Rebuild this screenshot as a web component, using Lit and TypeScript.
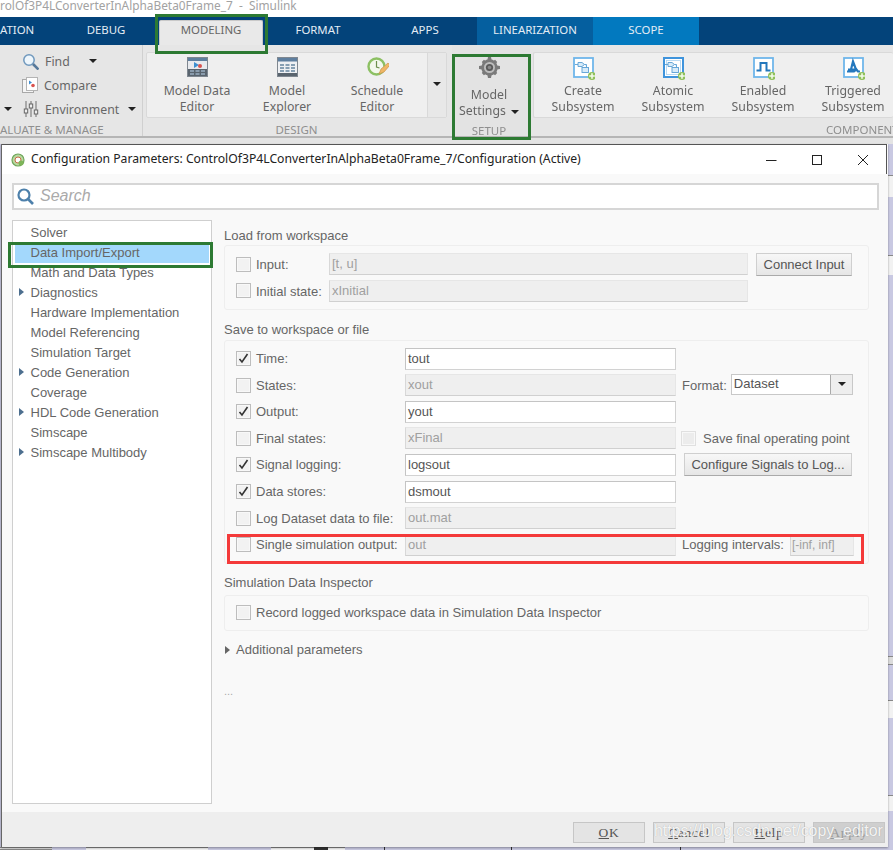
import { LitElement, html, css, svg } from "lit";
import { customElement } from "lit/decorators.js";

const plus = svg`<circle cx="19" cy="19" r="4" fill="#8fc05a"/><path d="M19 16.2v5.6M16.2 19h5.6" stroke="#f2fae8" stroke-width="1.6"/>`;
const frame = (s: number) => svg`<rect x="1" y="1" width="19" height="19" fill="#fff" stroke="#6fb6ea" stroke-width="${s}"/>`;
const subBlocks = svg`<path d="M5 5.5h4l2.5 2-2.5 2H5zM2 7.5h3M11.5 7.5h2v3" fill="#d7ebf9" stroke="#5a9fd4" stroke-width=".9"/><rect x="9" y="10.5" width="6.5" height="5" fill="#d7ebf9" stroke="#5a9fd4" stroke-width=".9"/>`;

const icons: Record<string, unknown> = {
  data: svg`<rect x=".5" y=".5" width="20" height="19" fill="#e8eaee" stroke="#7f8790"/><rect x="1" y="1" width="19" height="3" fill="#5f7f9f"/><path d="M7 5l5 3-5 3z" fill="#3d8fd0"/><circle cx="13" cy="9" r="2" fill="#d9534f"/><rect x="1" y="12" width="19" height="7" fill="#59646e"/><path d="M3 14h4M8.5 14h4M14 14h4M3 17h4M8.5 17h4M14 17h4" stroke="#b9d2ea" stroke-width="1.2"/>`,
  explorer: svg`<rect x=".5" y=".5" width="20" height="19" fill="#eef0f3" stroke="#7f8790"/><rect x="1" y="1" width="19" height="3.5" fill="#5f7f9f"/><path d="M3 8h4M8.5 8h4M14 8h4M3 11h4M8.5 11h4M14 11h4M3 14h4M8.5 14h4M14 14h4" stroke="#66849f" stroke-width="1.4"/><rect x="1" y="16" width="19" height="3" fill="#59646e"/>`,
  schedule: svg`<circle cx="9.5" cy="9.5" r="8" fill="#f3f8ec" stroke="#8cc063" stroke-width="2.4"/><path d="M9.5 4v6l3 1" fill="none" stroke="#6d8f4d" stroke-width="1.2"/><path d="M12 17l2-5 7-6 2 2-6 7z" fill="#efb765" stroke="#c9944d" stroke-width=".7"/>`,
  gear: svg`<g fill="#7a7a7a"><circle cx="10.5" cy="10.5" r="8.2"/><path d="M9 0h3l.6 3H8.400zM9 21h3l.6-3H8.400zM0 9v3l3 .6V8.400zM21 9v3l-3 .6V8.400zM2.800 4.900l2.100-2.100 2.500 1.700-2.900 2.900zM18.200 16.100l-2.100 2.100-2.500-1.700 2.900-2.900zM4.900 18.200l-2.100-2.100 1.700-2.500 2.900 2.900zM16.100 2.800l2.100 2.100-1.700 2.500-2.900-2.900z"/></g><circle cx="10.500" cy="10.500" r="5.500" fill="#bdbdbd"/><circle cx="10.500" cy="10.500" r="3.600" fill="#5a5a5a"/><circle cx="10.500" cy="10.500" r="1.800" fill="#8a8a8a"/>`,
  create: svg`${frame(1.8)}${subBlocks}${plus}`,
  atomic: svg`<rect x="1" y="1" width="19" height="19" fill="#fff" stroke="#3f94dc" stroke-width="2"/><rect x="3.500" y="3.500" width="14" height="14" fill="none" stroke="#a9d2f0" stroke-width=".8"/>${subBlocks}${plus}`,
  enabled: svg`${frame(1.8)}<path d="M3.500 13.500h4V6h6v7.500h4" fill="none" stroke="#2478bd" stroke-width="2"/>${plus}`,
  triggered: svg`${frame(1.8)}<path d="M4 14.500h3.500L10 4.500l3 8H5M8 14.500h3l2.500-2 1.500 2h2" fill="none" stroke="#2478bd" stroke-width="2.200"/>${plus}`,
  find: svg`<circle cx="7" cy="7" r="5.200" fill="#eef6fc" stroke="#6f98bd" stroke-width="1.500"/><path d="M11 11l5.500 5.500" stroke="#56789a" stroke-width="2.600"/>`,
  compare: svg`<rect x=".5" y="2.500" width="11" height="13" fill="#f5f5f5" stroke="#a8a8a8"/><rect x="4.500" y=".5" width="11" height="13" fill="#fff" stroke="#b4b4b4"/><path d="M7 3.500l3 2-3 2z" fill="#3f8ccf"/><circle cx="11" cy="8.500" r="1.800" fill="#d9534f"/>`,
  env: svg`<path d="M3 1v16M8 1v16M13 1v16" stroke="#777" stroke-width="1.100"/><rect x="1.300" y="9" width="3.400" height="4" fill="#eee" stroke="#666"/><rect x="6.300" y="4" width="3.400" height="4" fill="#eee" stroke="#666"/><rect x="11.300" y="10" width="3.400" height="4" fill="#eee" stroke="#666"/>`,
};

const tabs = [
  { t: "ATION", w: 53, c: "clip" },
  { t: "DEBUG", w: 106, c: "" },
  { t: "MODELING", w: 104, c: "active" },
  { t: "FORMAT", w: 110, c: "" },
  { t: "APPS", w: 104, c: "" },
  { t: "LINEARIZATION", w: 116, c: "lin" },
  { t: "SCOPE", w: 106, c: "scope" },
];

const tree = [
  ["Solver", 0], ["Data Import/Export", 0, 1], ["Math and Data Types", 0], ["Diagnostics", 1],
  ["Hardware Implementation", 0], ["Model Referencing", 0], ["Simulation Target", 0],
  ["Code Generation", 1], ["Coverage", 0], ["HDL Code Generation", 1], ["Simscape", 0], ["Simscape Multibody", 1],
] as [string, number, number?][];

const marks = [
  { c: "green", x: 155, y: 14, w: 113, h: 40 },
  { c: "green", x: 452, y: 54, w: 79, h: 86 },
  { c: "green", x: 8, y: 242, w: 205, h: 26 },
  { c: "red", x: 227, y: 534, w: 637, h: 30 },
];

const scraps = [
  { c: "w", x: 887, y: 175, w: 6, h: 22 }, { c: "w", x: 887, y: 255, w: 6, h: 20 },
  { c: "g", x: 887, y: 656, w: 6, h: 9 }, { c: "w", x: 887, y: 700, w: 6, h: 18 },
  { c: "w", x: 887, y: 795, w: 6, h: 16 },
  { c: "g", x: 0, y: 847, w: 52, h: 3 }, { c: "w", x: 86, y: 847, w: 122, h: 3 },
  { c: "w", x: 271, y: 847, w: 74, h: 3 }, { c: "k", x: 314, y: 847, w: 14, h: 3 },
  { c: "k", x: 384, y: 847, w: 1, h: 3 }, { c: "k", x: 511, y: 847, w: 1, h: 3 }, { c: "k", x: 680, y: 847, w: 1, h: 3 },
];

@customElement("app-root")
export class AppRoot extends LitElement {
  static styles = css`
    :host { display: block; width: 893px; height: 850px; overflow: hidden; background: #fff; }
    .page { position: relative; width: 893px; height: 850px; display: flex; flex-direction: column; overflow: hidden; filter: blur(0.35px);
      font-family: "Noto Sans", "Open Sans", sans-serif; color: #666; }
    .title { height: 17px; flex: none; font-size: 11.85px; line-height: 11px; color: #a2a2a2; white-space: pre; background: #fff; overflow: hidden; }
    .tabs { height: 28px; flex: none; background: #03437a; display: flex; }
    .tab { display: flex; align-items: center; justify-content: center; color: #e4edf5; font-size: 11.4px; padding-bottom: 3px; box-sizing: border-box; }
    .tab.clip { justify-content: flex-start; }
    .tab.active { background: #e9e9e9; color: #666; margin-top: 3px; padding-bottom: 8px; border: 1px solid #c9c9c9; border-bottom: 0; border-radius: 2px 2px 0 0; }
    .tab.lin { background: #055f9f; }
    .tab.scope { background: #0279bf; }
    .ribbon { height: 93px; flex: none; background: #e6e6e6; border-bottom: 2px solid #b5b5b5; box-sizing: border-box; display: flex; }
    .sec { display: flex; flex-direction: column; flex: none; box-sizing: border-box; }
    .sec-left { width: 143px; border-right: 1px solid #d0d0d0; }
    .sec-design { width: 301px; margin-left: 3px; padding-top: 7px; }
    .sec-setup { width: 78px; margin-left: 5px; background: #e3e3e3; padding-right: 4px; }
    .sec-comp { flex: 1; margin-left: 3px; padding-top: 7px; overflow: hidden; }
    .panel { height: 66px; flex: none; display: flex; background: #efefef; border: 1px solid #d9d9d9; border-radius: 2px; box-sizing: border-box; }
    .sec-comp .panel { border-right: 0; padding-left: 4px; }
    .sec-design .panel { padding-left: 5px; }
    .item { width: 90px; flex: none; display: flex; flex-direction: column; align-items: center; font-size: 12.3px; line-height: 16px; color: #666; text-align: center; white-space: nowrap; }
    .item svg { margin-top: 4px; margin-bottom: 3px; }
    .more { margin-left: auto; width: 19px; border-left: 1px solid #d9d9d9; background: #e8e8e8; display: flex; align-items: flex-start; justify-content: center; padding-top: 29px; box-sizing: border-box; }
    .caret { width: 0; height: 0; border-left: 4px solid transparent; border-right: 4px solid transparent; border-top: 4px solid #222; display: inline-block; flex: none; }
    .seclabel { font-size: 11.5px; color: #8f8f8f; text-align: center; white-space: nowrap; margin-top: 4px; line-height: 16px; }
    .sec-left .seclabel { text-align: left; margin-top: 1px; }
    .sec-comp .seclabel { text-align: left; margin-left: 293px; }
    .mini { height: 24px; display: flex; align-items: center; font-size: 12.3px; color: #666; position: relative; }
    .minis { height: 76px; padding-top: 4px; box-sizing: border-box; display: flex; flex-direction: column; }
    .mini svg { flex: none; margin-right: 6px; }
    .setup { display: flex; flex-direction: column; align-items: center; height: 76px; font-size: 12.3px; line-height: 16px; padding-top: 12px; box-sizing: border-box; }
    .setup svg { margin-bottom: 9px; }
    .setup .caret { margin-left: 5px; vertical-align: middle; }
    .work { flex: 1; background: #c9c9e2; position: relative; }
    .strip { height: 6px; background: #e4e4e4; }
    .scrap { position: absolute; }
    .scrap.w { background: #f2f2f2; border-top: 1px solid #888; box-sizing: border-box; }
    .scrap.g { background: #dcdcdc; border-top: 1px solid #888; border-bottom: 1px solid #888; box-sizing: border-box; }
    .scrap.k { background: #333; }
    .dialog { position: absolute; left: 1px; top: 144px; width: 887px; height: 703px; display: flex; flex-direction: column; background: #f9f9f9; border-left: 1px solid #666; box-sizing: border-box; box-shadow: 0 1px 2px rgba(0,0,0,.35); }
    .dtitle { height: 30px; flex: none; background: #fff; border-top: 1px solid #555; border-right: 1px solid #555; margin-right: 1px; box-sizing: border-box; display: flex; align-items: center; padding-left: 9px; font-size: 12.2px; color: #222; }
    .dtitle .t { margin-left: 6px; white-space: nowrap; padding-bottom: 2px; }
    .winbtns { margin-left: auto; display: flex; }
    .winbtns svg { display: block; width: 46px; height: 14px; }
    .body { flex: 1; min-height: 0; padding: 9px 9px 8px 10px; display: flex; flex-direction: column; font-family: "Liberation Sans", Arial, sans-serif; font-size: 13px; color: #666; }
    .search { height: 27px; flex: none; background: #fff; border: 2px solid #d6d6d6; box-sizing: border-box; display: flex; align-items: center; padding-left: 3px; font-size: 16px; font-style: italic; color: #aaa; }
    .search svg { margin-right: 6px; }
    .search span { padding-bottom: 2px; }
    .cols { flex: 1; min-height: 0; margin-top: 10px; display: flex; }
    .tree { width: 200px; flex: none; background: #fff; border: 1px solid #cfcfcf; box-sizing: border-box; padding: 1px 2px; }
    .node { height: 20px; display: flex; align-items: center; padding-left: 15.5px; position: relative; white-space: nowrap; box-sizing: border-box; }
    .node.sel { background: #a3d8fc; margin-top: 1px; margin-bottom: -1px; padding-bottom: 2px; }
    .node.kids::before, .more-row::before { content: ""; border-left: 5px solid #4d6f8f; border-top: 4px solid transparent; border-bottom: 4px solid transparent; position: absolute; left: 4px; top: 6px; }
    .main { flex: 1; margin-left: 12px; margin-right: 10px; min-width: 0; display: flex; flex-direction: column; }
    .gtitle { height: 25px; line-height: 31px; color: #666; flex: none; box-sizing: border-box; }
    .group { border: 1px solid #eeeeee; border-radius: 3px; box-sizing: border-box; padding: 7px 15px 7px 11px; display: flex; flex-direction: column; gap: 4.6px; flex: none; }
    .row { height: 22px; display: flex; align-items: center; flex: none; }
    .cb { width: 15px; height: 15px; flex: none; box-sizing: border-box; border: 1px solid #bdbdbd; background: #f2f2f2; margin-right: 5px; display: flex; align-items: center; justify-content: center; box-shadow: inset 0 0 0 1px #f8f8f8; }
    .cb.dim { border-color: #e0e0e0; background: #ececec; }
    .lab { flex: none; white-space: nowrap; }
    .l72 { width: 73px; padding-top: 1px; }
    .l148 { width: 149px; }
    .f { height: 22px; box-sizing: border-box; border: 1px solid #d2d2d2; border-left-color: #c4c4c4; border-top-color: #c4c4c4; background: #fff; color: #555; padding-left: 2px; line-height: 20px; flex: none; white-space: nowrap; overflow: hidden; }
    .f.off { background: #efefef; color: #a0a0a0; border-color: #e6e6e6 #e6e6e6 #d0d0d0 #d8d8d8; }
    .w419 { width: 419px; }
    .w271 { width: 271px; }
    .w64 { width: 64px; font-size: 12px; padding-left: 1px; }
    .btn { height: 23px; box-sizing: border-box; border: 1px solid #cfcfcf; border-bottom-color: #aaa; background: linear-gradient(#f7f7f7, #e6e6e6); color: #555; display: flex; align-items: center; justify-content: center; flex: none; white-space: nowrap; }
    .ml8 { margin-left: 8px; width: 96px; }
    .ml8b { margin-left: 8px; width: 168px; }
    .after { margin-left: 6px; white-space: nowrap; }
    .combo { margin-left: 4px; width: 124px; height: 21px; display: flex; box-sizing: border-box; border: 1px solid #c8c8c8; background: #fff; color: #555; padding-left: 2px; line-height: 18px; margin-bottom: 2px; }
    .combo .val { flex: 1; }
    .combo .dd { width: 21px; border-left: 1px solid #aaa; background: #eee; display: flex; align-items: center; justify-content: center; }
    .gap6 { margin-left: 6px; }
    .gap5 { margin-left: 5px; display: flex; align-items: center; }
    .gap5 .cb { margin-right: 7px; }
    .gt2 { height: 25px; margin-top: 6px; line-height: 26px; }
    .more-row { position: relative; padding-left: 12px; margin-top: 9px; height: 20px; line-height: 20px; }
    .more-row::before { left: 1px; border-left-color: #666; }
    .dots { margin-top: 25px; color: #aaa; font-size: 11px; }
    .foot { height: 35px; flex: none; background: #eeeeee; display: flex; gap: 8px; justify-content: flex-end; padding: 10px 3px 0 0; box-sizing: border-box; }
    .fb { width: 72px; height: 21px; box-sizing: border-box; border: 1px solid #c6c6c6; background: #e4e4e4; font-family: "Liberation Serif", serif; font-size: 13.5px; letter-spacing: .7px; color: #555; display: flex; align-items: center; justify-content: center; }
    .fb u { text-underline-offset: 1px; }
    .fb.off { background: #cfcfcf; color: #999; }
    .mark { position: absolute; box-sizing: border-box; border: 3px solid; pointer-events: none; }
    .mark.green { border-color: #2d7a33; }
    .mark.red { border-color: #f43a3a; }
    .water { position: absolute; left: 654px; top: 821px; font-family: "Liberation Sans", Arial, sans-serif; font-size: 15.9px; line-height: 20px; color: rgba(255,255,255,.9); text-shadow: 0 0 1px rgba(120,120,120,.6); white-space: nowrap; }
  `;

  private icon(name: string, w = 23, h = 23, vb = "-1 0 23 23") {
    return html`<svg width=${w} height=${h} viewBox=${vb}>${icons[name]}</svg>`;
  }

  private check(on = false) {
    return html`<span class="cb">${on
      ? html`<svg width="11" height="11" viewBox="0 0 11 11"><path d="M1.500 6l2.500 3 5.500-8" fill="none" stroke="#333" stroke-width="1.600"/></svg>`
      : ""}</span>`;
  }

  private saveRow(label: string, on: boolean, value: string, right: unknown = "") {
    return html`<div class="row">${this.check(on)}<span class="lab l148">${label}</span><span class="f w271 ${on ? "" : "off"}">${value}</span>${right}</div>`;
  }

  private item(icon: string, a: string, b: string) {
    return html`<div class="item">${this.icon(icon)}<span>${a}</span><span>${b}</span></div>`;
  }

  render() {
    return html`<div class="page">
      <div class="title">rolOf3P4LConverterInAlphaBeta0Frame_7  -  Simulink</div>
      <div class="tabs">
        ${tabs.map((t) => html`<div class="tab ${t.c}" style="width:${t.w}px">${t.t}</div>`)}
      </div>
      <div class="ribbon">
        <div class="sec sec-left">
          <div class="minis">
            <div class="mini" style="padding-left:22px">${this.icon("find", 17, 17, "0 0 17 17")}Find<span class="caret" style="margin-left:19px"></span></div>
            <div class="mini" style="padding-left:22px">${this.icon("compare", 16, 16, "0 0 16 16")}Compare</div>
            <div class="mini" style="padding-left:4px"><span class="caret" style="margin-right:11px"></span>${this.icon("env", 16, 18, "0 0 16 18")}Environment<span class="caret" style="margin-left:9px"></span></div>
          </div>
          <div class="seclabel">ALUATE &amp; MANAGE</div>
        </div>
        <div class="sec sec-design">
          <div class="panel">
            ${this.item("data", "Model Data", "Editor")}
            ${this.item("explorer", "Model", "Explorer")}
            ${this.item("schedule", "Schedule", "Editor")}
            <div class="more"><span class="caret"></span></div>
          </div>
          <div class="seclabel">DESIGN</div>
        </div>
        <div class="sec sec-setup">
          <div class="setup">
            ${this.icon("gear", 21, 21, "0 0 21 21")}
            <span>Model</span>
            <span>Settings<span class="caret"></span></span>
          </div>
          <div class="seclabel" style="margin-top:4px">SETUP</div>
        </div>
        <div class="sec sec-comp">
          <div class="panel">
            ${this.item("create", "Create", "Subsystem")}
            ${this.item("atomic", "Atomic", "Subsystem")}
            ${this.item("enabled", "Enabled", "Subsystem")}
            ${this.item("triggered", "Triggered", "Subsystem")}
          </div>
          <div class="seclabel">COMPONENT</div>
        </div>
      </div>
      <div class="strip"></div>
      <div class="work">
        ${scraps.map((s) => html`<div class="scrap ${s.c}" style="left:${s.x}px;top:${s.y - 144}px;width:${s.w}px;height:${s.h}px"></div>`)}
      </div>

      <div class="dialog">
        <div class="dtitle">
          <svg width="14" height="14" viewBox="0 0 14 14"><circle cx="7" cy="7" r="6" fill="#b9d9a0" stroke="#6ea65a" stroke-width="1.200"/><circle cx="7" cy="7" r="3" fill="#fff" stroke="#c96a4a"/><circle cx="10" cy="10" r="2.500" fill="#7eb558"/></svg>
          <span class="t">Configuration Parameters: ControlOf3P4LConverterInAlphaBeta0Frame_7/Configuration (Active)</span>
          <div class="winbtns">
            <svg viewBox="0 0 46 14"><path d="M18 7.500h10.500" stroke="#222"/></svg>
            <svg viewBox="0 0 46 14"><rect x="18.500" y="2.500" width="9" height="9" fill="none" stroke="#222"/></svg>
            <svg viewBox="0 0 46 14"><path d="M18 2l10 10M28 2L18 12" stroke="#222" fill="none"/></svg>
          </div>
        </div>
        <div class="body">
          <div class="search">
            <svg width="17" height="17" viewBox="0 0 17 17"><circle cx="7" cy="7" r="5.500" fill="none" stroke="#4d80ab" stroke-width="2.200"/><path d="M11 11l5 5" stroke="#4d80ab" stroke-width="2.600"/></svg>
            <span>Search</span>
          </div>
          <div class="cols">
            <div class="tree">
              ${tree.map(([t, k, s]) => html`<div class="node ${k ? "kids" : ""} ${s ? "sel" : ""}">${t}</div>`)}
            </div>
            <div class="main">
              <div class="gtitle">Load from workspace</div>
              <div class="group">
                <div class="row">${this.check()}<span class="lab l72">Input:</span><span class="f off w419">[t, u]</span><span class="btn ml8">Connect Input</span></div>
                <div class="row">${this.check()}<span class="lab l72">Initial state:</span><span class="f off w419">xInitial</span></div>
              </div>
              <div class="gtitle" style="margin-top:5px;line-height:30px">Save to workspace or file</div>
              <div class="group">
                ${this.saveRow("Time:", true, "tout")}
                ${this.saveRow("States:", false, "xout", html`<span class="after">Format:</span><span class="combo"><span class="val">Dataset</span><span class="dd"><span class="caret"></span></span></span>`)}
                ${this.saveRow("Output:", true, "yout")}
                ${this.saveRow("Final states:", false, "xFinal", html`<span class="gap5"><span class="cb dim"></span>Save final operating point</span>`)}
                ${this.saveRow("Signal logging:", true, "logsout", html`<span class="btn ml8b">Configure Signals to Log...</span>`)}
                ${this.saveRow("Data stores:", true, "dsmout")}
                ${this.saveRow("Log Dataset data to file:", false, "out.mat")}
                ${this.saveRow("Single simulation output:", false, "out", html`<span class="after">Logging intervals:</span><span class="f off w64 gap6">[-inf, inf]</span>`)}
              </div>
              <div class="gtitle gt2">Simulation Data Inspector</div>
              <div class="group">
                <div class="row" style="height:20px">${this.check()}<span class="lab">Record logged workspace data in Simulation Data Inspector</span></div>
              </div>
              <div class="more-row">Additional parameters</div>
              <div class="dots">...</div>
            </div>
          </div>
        </div>
        <div class="foot">
          <span class="fb"><u>O</u>K</span>
          <span class="fb"><u>C</u>ancel</span>
          <span class="fb"><u>H</u>elp</span>
          <span class="fb off"><u>A</u>pply</span>
        </div>
      </div>

      ${marks.map((m) => html`<div class="mark ${m.c}" style="left:${m.x}px;top:${m.y}px;width:${m.w}px;height:${m.h}px"></div>`)}
      <div class="water">https://blog.csdn.net/copy_editor</div>
    </div>`;
  }
}
